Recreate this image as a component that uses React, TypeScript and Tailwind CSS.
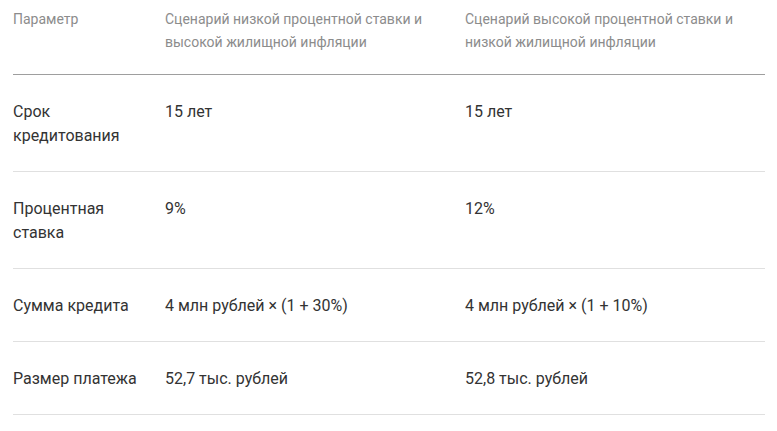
const rows = [
  { param: 'Срок кредитования', low: '15 лет', high: '15 лет' },
  { param: 'Процентная ставка', low: '9%', high: '12%' },
  { param: 'Сумма кредита', low: '4 млн рублей × (1 + 30%)', high: '4 млн рублей × (1 + 10%)' },
  { param: 'Размер платежа', low: '52,7 тыс. рублей', high: '52,8 тыс. рублей' },
];

export default function App() {
  return (
    <div className="min-h-screen bg-white px-[13px] font-['Roboto',sans-serif]">
      <table className="w-[752px] table-fixed border-collapse">
        <colgroup>
          <col className="w-[152px]" />
          <col className="w-[300px]" />
          <col className="w-[300px]" />
        </colgroup>
        <thead>
          <tr className="border-b border-[#9e9e9e] text-left align-top text-[14px] leading-[23px] text-[#8c8c8c]">
            <th className="pt-[8px] pb-[20px] pr-[24px] font-normal">Параметр</th>
            <th className="pt-[8px] pb-[20px] pr-[20px] font-normal">
              Сценарий низкой процентной ставки и высокой жилищной инфляции
            </th>
            <th className="pt-[8px] pb-[20px] pr-[20px] font-normal">
              Сценарий высокой процентной ставки и низкой жилищной инфляции
            </th>
          </tr>
        </thead>
        <tbody>
          {rows.map((r) => (
            <tr key={r.param} className="border-b border-[#e0e0e0] align-top text-[16px] leading-[24px] text-[#333]">
              <td className="pt-[25px] pb-[23px] pr-[24px]">{r.param}</td>
              <td className="pt-[25px] pb-[23px] pr-[20px]">{r.low}</td>
              <td className="pt-[25px] pb-[23px] pr-[20px]">{r.high}</td>
            </tr>
          ))}
        </tbody>
      </table>
    </div>
  );
}
